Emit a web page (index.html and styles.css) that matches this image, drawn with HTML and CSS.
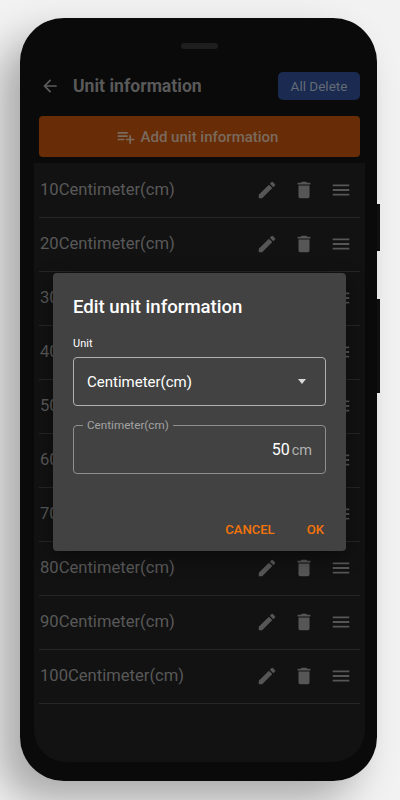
FILE: index.html
```html
<!DOCTYPE html>
<html lang="en">
<head>
  <meta charset="UTF-8" />
  <meta name="viewport" content="width=device-width, initial-scale=1.0" />
  <title>Unit information</title>
  <link rel="stylesheet" href="styles.css">
</head>
<body>
  <svg class="defs" aria-hidden="true">
    <symbol id="i-edit" viewBox="0 0 24 24"><path d="M3 17.25V21h3.75L17.81 9.94l-3.75-3.75L3 17.25zM20.71 7.04a1 1 0 0 0 0-1.41l-2.34-2.34a1 1 0 0 0-1.41 0l-1.83 1.83 3.75 3.75 1.83-1.83z"/></symbol>
    <symbol id="i-delete" viewBox="0 0 24 24"><path d="M6 19c0 1.1.9 2 2 2h8c1.1 0 2-.9 2-2V7H6v12zM19 4h-3.5l-1-1h-5l-1 1H5v2h14V4z"/></symbol>
    <symbol id="i-menu" viewBox="0 0 24 24"><path d="M3 18h18v-2H3v2zm0-5h18v-2H3v2zm0-7v2h18V6H3z"/></symbol>
  </svg>

  <div class="phone">
    <span class="side-btn side-btn-top"></span>
    <span class="side-btn side-btn-bottom"></span>
    <div class="speaker"></div>

    <header class="topbar">
      <svg class="back" viewBox="0 0 24 24"><path d="M20 11H7.83l5.59-5.59L12 4l-8 8 8 8 1.41-1.41L7.83 13H20v-2z"/></svg>
      <h1>Unit information</h1>
      <button class="btn-delete">All Delete</button>
    </header>

    <button class="btn-add">
      <svg viewBox="0 0 24 24"><path d="M14 10H2v2h12v-2zm0-4H2v2h12V6zm4 8v-4h-2v4h-4v2h4v4h2v-4h4v-2h-4zM2 16h8v-2H2v2z"/></svg>
      Add unit information
    </button>

    <section class="screen">
      <div class="row"><span class="row-name">10Centimeter(cm)</span><svg class="icon"><use href="#i-edit"/></svg><svg class="icon"><use href="#i-delete"/></svg><svg class="icon"><use href="#i-menu"/></svg></div>
      <div class="row"><span class="row-name">20Centimeter(cm)</span><svg class="icon"><use href="#i-edit"/></svg><svg class="icon"><use href="#i-delete"/></svg><svg class="icon"><use href="#i-menu"/></svg></div>
      <div class="row"><span class="row-name">30Centimeter(cm)</span><svg class="icon"><use href="#i-edit"/></svg><svg class="icon"><use href="#i-delete"/></svg><svg class="icon"><use href="#i-menu"/></svg></div>
      <div class="row"><span class="row-name">40Centimeter(cm)</span><svg class="icon"><use href="#i-edit"/></svg><svg class="icon"><use href="#i-delete"/></svg><svg class="icon"><use href="#i-menu"/></svg></div>
      <div class="row"><span class="row-name">50Centimeter(cm)</span><svg class="icon"><use href="#i-edit"/></svg><svg class="icon"><use href="#i-delete"/></svg><svg class="icon"><use href="#i-menu"/></svg></div>
      <div class="row"><span class="row-name">60Centimeter(cm)</span><svg class="icon"><use href="#i-edit"/></svg><svg class="icon"><use href="#i-delete"/></svg><svg class="icon"><use href="#i-menu"/></svg></div>
      <div class="row"><span class="row-name">70Centimeter(cm)</span><svg class="icon"><use href="#i-edit"/></svg><svg class="icon"><use href="#i-delete"/></svg><svg class="icon"><use href="#i-menu"/></svg></div>
      <div class="row"><span class="row-name">80Centimeter(cm)</span><svg class="icon"><use href="#i-edit"/></svg><svg class="icon"><use href="#i-delete"/></svg><svg class="icon"><use href="#i-menu"/></svg></div>
      <div class="row"><span class="row-name">90Centimeter(cm)</span><svg class="icon"><use href="#i-edit"/></svg><svg class="icon"><use href="#i-delete"/></svg><svg class="icon"><use href="#i-menu"/></svg></div>
      <div class="row"><span class="row-name">100Centimeter(cm)</span><svg class="icon"><use href="#i-edit"/></svg><svg class="icon"><use href="#i-delete"/></svg><svg class="icon"><use href="#i-menu"/></svg></div>
    </section>

    <div class="dialog">
      <h2>Edit unit information</h2>
      <div class="field-caption">Unit</div>
      <div class="select">
        <span>Centimeter(cm)</span>
        <span class="caret"></span>
      </div>
      <fieldset class="input">
        <legend>Centimeter(cm)</legend>
        <span class="value">50</span><span class="suffix">cm</span>
      </fieldset>
      <div class="actions">
        <button>CANCEL</button>
        <button>OK</button>
      </div>
    </div>
  </div>
</body>
</html>
```

FILE: styles.css
```css
html, body {
  height: 100%;
}

body {
  margin: 0;
  padding: 18px 0 0 20px;
  box-sizing: border-box;
  overflow: hidden;
  background: #f2f2f2;
  font-family: Roboto, sans-serif;
}

.defs {
  display: none;
}

button {
  font-family: inherit;
  border: none;
  cursor: pointer;
}

.phone {
  position: relative;
  width: 357px;
  height: 763px;
  box-sizing: border-box;
  padding: 25px 12px 19px 14px;
  display: flex;
  flex-direction: column;
  background: #0a0a0a;
  border-radius: 44px;
  box-shadow: -20px 20px 40px rgba(0, 0, 0, 0.3);
}

.side-btn {
  position: absolute;
  left: 100%;
  width: 3px;
  background: #0f0f0f;
}

.side-btn-top {
  top: 186px;
  height: 47px;
}

.side-btn-bottom {
  top: 281px;
  height: 94px;
}

.speaker {
  width: 37px;
  height: 6px;
  margin: 0 auto;
  background: #1e1e1e;
  border-radius: 3px;
}

.topbar {
  display: flex;
  align-items: center;
  height: 28px;
  margin: 23px 5px 16px 6px;
}

.back {
  width: 20px;
  height: 20px;
  fill: #5c5c5c;
}

.topbar h1 {
  flex: 1;
  margin: 0 0 0 13px;
  font-size: 17.6px;
  font-weight: 700;
  color: #595959;
}

.btn-delete {
  width: 82px;
  height: 28px;
  padding: 0;
  border-radius: 5px;
  background: #1a2a50;
  color: #646a76;
  font-size: 13.5px;
}

.btn-add {
  height: 41px;
  margin: 0 5px 6px;
  padding: 0 5px 0 0;
  flex-shrink: 0;
  display: flex;
  align-items: center;
  justify-content: center;
  gap: 5px;
  border-radius: 4px;
  background: #682d06;
  color: #7a6a5e;
  font-size: 15px;
  font-weight: 500;
}

.btn-add svg {
  width: 20px;
  height: 20px;
  fill: #7a6a5e;
}

.screen {
  flex: 1;
  padding: 1px 5px 0;
  background: #121212;
  border-radius: 0 0 32px 32px;
}

.row {
  height: 54px;
  box-sizing: border-box;
  display: flex;
  align-items: center;
  gap: 15px;
  padding: 0 8px 2px 0;
  border-bottom: 1px solid #262626;
}

.row-name {
  flex: 1;
  padding-left: 1px;
  font-size: 16.6px;
  color: #595959;
}

.icon {
  width: 22px;
  height: 22px;
  fill: #565656;
}

.dialog {
  position: absolute;
  left: 33px;
  top: 255px;
  width: 293px;
  height: 278px;
  box-sizing: border-box;
  padding: 20px;
  background: #424242;
  border-radius: 4px;
  box-shadow: 0 6px 20px rgba(0, 0, 0, 0.4);
  color: #fff;
}

.dialog h2 {
  margin: 0;
  height: 28px;
  line-height: 28px;
  font-size: 18.6px;
  font-weight: 500;
}

.field-caption {
  margin-top: 16px;
  height: 14px;
  line-height: 14px;
  font-size: 11px;
}

.select {
  height: 49px;
  margin-top: 6px;
  box-sizing: border-box;
  padding: 0 19px 0 13px;
  display: flex;
  align-items: center;
  justify-content: space-between;
  border: 1px solid #b0b0b0;
  border-radius: 4px;
  font-size: 15px;
}

.caret {
  width: 0;
  height: 0;
  border-left: 4px solid transparent;
  border-right: 4px solid transparent;
  border-top: 5px solid #d8d8d8;
}

.input {
  height: 56px;
  margin: 12px 0 0;
  box-sizing: border-box;
  padding: 0 13px 0 0;
  display: block;
  text-align: right;
  border: 1px solid #8e8e8e;
  border-radius: 4px;
}

.input legend {
  margin-left: 9px;
  padding: 0 4px;
  font-size: 11.7px;
  line-height: 14px;
  text-align: left;
  color: #a2a2a2;
}

.value {
  font-size: 16px;
  line-height: 36px;
}

.suffix {
  margin-left: 2px;
  font-size: 14.5px;
  color: #b0b0b0;
}

.actions {
  position: absolute;
  right: 22px;
  bottom: 14px;
  display: flex;
  gap: 32px;
}

.actions button {
  padding: 0;
  background: none;
  color: #f5740a;
  font-size: 13.1px;
  font-weight: 500;
}
```
